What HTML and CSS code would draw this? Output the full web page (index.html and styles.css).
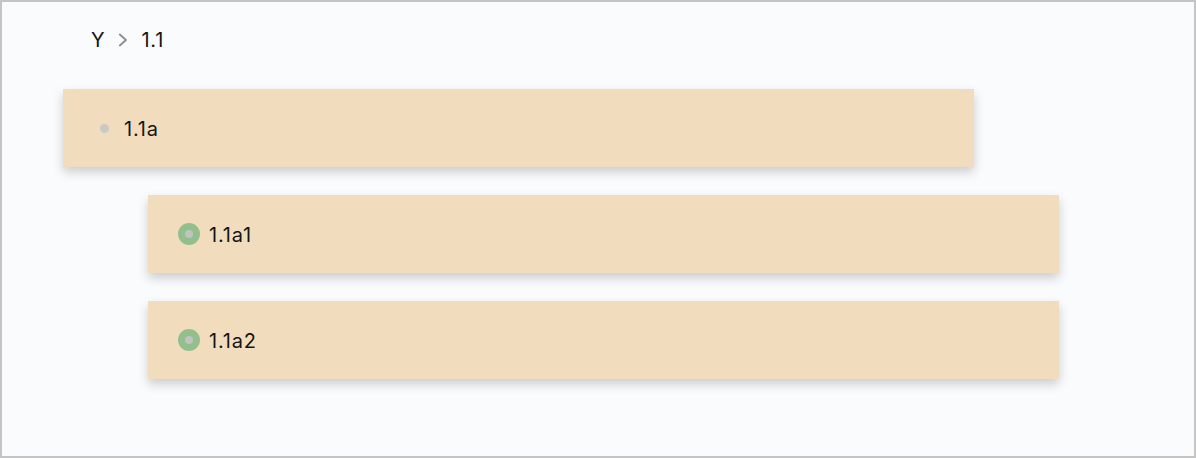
FILE: index.html
```html
<!DOCTYPE html>
<html>
<head>
<meta charset="utf-8">
<link rel="stylesheet" href="styles.css">
</head>
<body>
<div class="frame">
  <nav class="crumbs">
    <span class="crumb">Y</span>
    <svg class="chev" width="10" height="14" viewBox="0 0 10 14"><path d="M1.8 1.5 L8 7 L1.8 12.5" fill="none" stroke="#8c8c8c" stroke-width="1.8" stroke-linecap="round" stroke-linejoin="round"/></svg>
    <span class="crumb">1.1</span>
  </nav>
  <div class="list">
    <div class="card">
      <span class="bullet"><span class="dot"></span></span>
      <span class="label">1.1a</span>
    </div>
    <div class="card child">
      <span class="bullet"><span class="ring"></span></span>
      <span class="label">1.1a1</span>
    </div>
    <div class="card child">
      <span class="bullet"><span class="ring"></span></span>
      <span class="label">1.1a2</span>
    </div>
  </div>
</div>
</body>
</html>
```
FILE: styles.css
```css
html, body {
  margin: 0;
  padding: 0;
}
body {
  font-family: Inter, "Noto Sans", sans-serif;
  color: #151515;
}
.frame {
  box-sizing: border-box;
  width: 1196px;
  height: 458px;
  border: 2px solid #c4c4c4;
  background: #fafbfd;
  padding: 0 0 0 61px;
}
.crumbs {
  display: flex;
  align-items: center;
  height: 24px;
  padding: 26px 0 0 28px;
  font-size: 20px;
  line-height: 24px;
  letter-spacing: 0.8px;
}
.chev {
  display: block;
  margin: 0 13px 0 13px;
}
.list {
  display: flex;
  flex-direction: column;
  gap: 28px;
  margin-top: 37px;
}
.card {
  box-sizing: border-box;
  width: 911px;
  height: 78px;
  background: #f1ddbd;
  box-shadow: 0 5px 10px rgba(0, 0, 0, 0.19);
  display: flex;
  align-items: center;
  padding-left: 30px;
  gap: 9px;
}
.card.child {
  margin-left: 85px;
}
.bullet {
  width: 22px;
  height: 22px;
  display: flex;
  align-items: center;
  justify-content: center;
}
.dot {
  width: 9px;
  height: 9px;
  border-radius: 50%;
  background: #c9c9c6;
}
.ring {
  box-sizing: border-box;
  width: 22px;
  height: 22px;
  border-radius: 50%;
  background: #c0c3c0;
  border: 7px solid #93bf8e;
}
.label {
  font-size: 20px;
  line-height: 24px;
  letter-spacing: 0.8px;
  padding-top: 2px;
}
```
